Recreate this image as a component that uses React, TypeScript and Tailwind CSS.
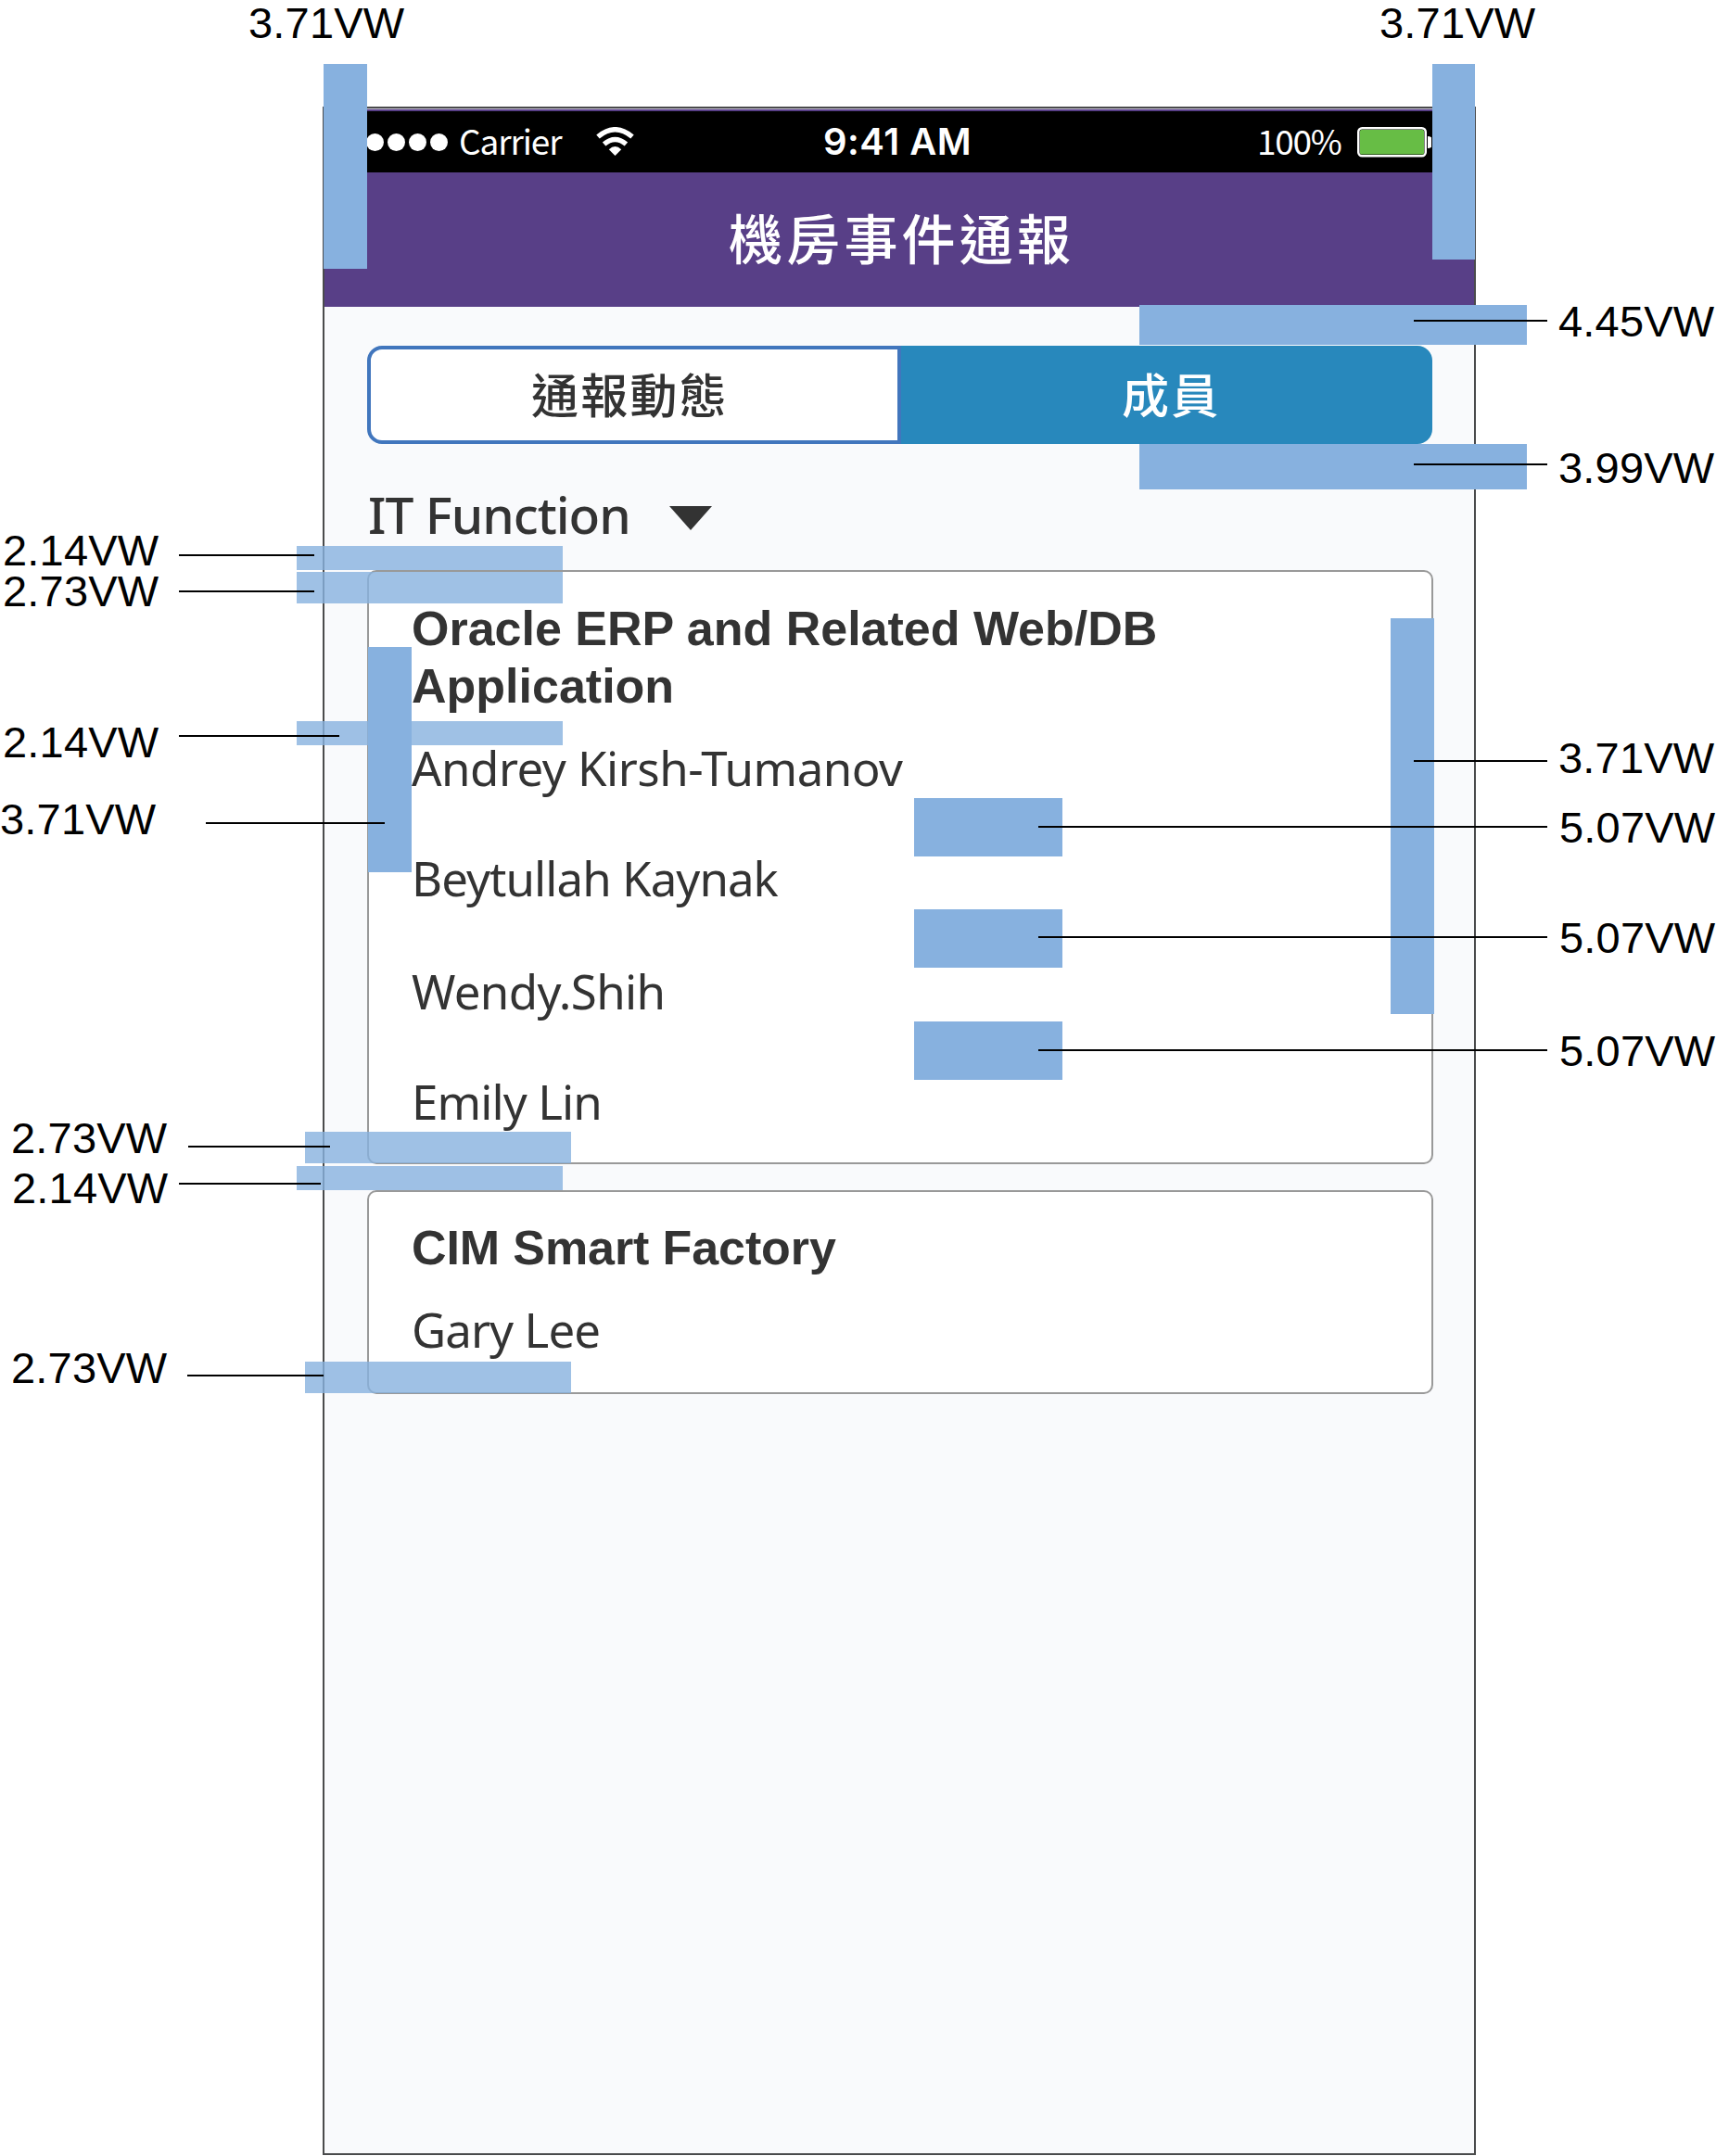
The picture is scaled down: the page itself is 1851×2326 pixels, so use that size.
type Group = { title: string; titleClass: string; members: { name: string; className: string }[] };

const GROUPS: Group[] = [
  {
    title: "Oracle ERP and Related Web/DB Application",
    titleClass: "h-[124px]",
    members: [
      { name: "Andrey Kirsh-Tumanov", className: "mt-[31px] tracking-[-0.5px]" },
      { name: "Beytullah Kaynak", className: "mt-[67px] tracking-[-0.95px]" },
      { name: "Wendy.Shih", className: "mt-[70px] tracking-[-0.65px]" },
      { name: "Emily Lin", className: "mt-[67px] tracking-[-0.9px]" },
    ],
  },
  {
    title: "CIM Smart Factory",
    titleClass: "h-[62px] tracking-[-0.1px]",
    members: [{ name: "Gary Lee", className: "mt-[31px] tracking-[-0.9px]" }],
  },
];

// Spacing guides laid over the mockup
const BARS = [
  "left-[320px] top-[589px] w-[287px] h-[26px] bg-[#87b1df]/80",
  "left-[320px] top-[617px] w-[287px] h-[34px] bg-[#87b1df]/80",
  "left-[320px] top-[778px] w-[287px] h-[26px] bg-[#87b1df]/80",
  "left-[329px] top-[1221px] w-[287px] h-[34px] bg-[#87b1df]/80",
  "left-[320px] top-[1258px] w-[287px] h-[26px] bg-[#87b1df]/80",
  "left-[329px] top-[1469px] w-[287px] h-[34px] bg-[#87b1df]/80",
  "left-[349px] top-[69px] w-[47px] h-[221px] bg-[#87b1df]",
  "left-[1545px] top-[69px] w-[46px] h-[211px] bg-[#87b1df]",
  "left-[1229px] top-[329px] w-[418px] h-[43px] bg-[#87b1df]",
  "left-[1229px] top-[479px] w-[418px] h-[49px] bg-[#87b1df]",
  "left-[397px] top-[698px] w-[47px] h-[243px] bg-[#87b1df]",
  "left-[1500px] top-[667px] w-[47px] h-[427px] bg-[#87b1df]",
  "left-[986px] top-[861px] w-[160px] h-[63px] bg-[#87b1df]",
  "left-[986px] top-[981px] w-[160px] h-[63px] bg-[#87b1df]",
  "left-[986px] top-[1102px] w-[160px] h-[63px] bg-[#87b1df]",
];

const LINES = [
  "left-[193px] top-[598px] w-[146px]",
  "left-[193px] top-[637px] w-[146px]",
  "left-[193px] top-[793px] w-[173px]",
  "left-[222px] top-[887px] w-[193px]",
  "left-[203px] top-[1236px] w-[153px]",
  "left-[193px] top-[1276px] w-[153px]",
  "left-[202px] top-[1483px] w-[147px]",
  "left-[1525px] top-[345px] w-[144px]",
  "left-[1525px] top-[500px] w-[144px]",
  "left-[1525px] top-[820px] w-[144px]",
  "left-[1120px] top-[891px] w-[549px]",
  "left-[1120px] top-[1010px] w-[549px]",
  "left-[1120px] top-[1132px] w-[549px]",
];

const LABELS: [string, string][] = [
  ["3.71VW", "left-[268px] top-[1px]"],
  ["3.71VW", "left-[1488px] top-[1px]"],
  ["4.45VW", "left-[1681px] top-[323px]"],
  ["3.99VW", "left-[1681px] top-[481px]"],
  ["3.71VW", "left-[1681px] top-[794px]"],
  ["5.07VW", "left-[1682px] top-[869px]"],
  ["5.07VW", "left-[1682px] top-[988px]"],
  ["5.07VW", "left-[1682px] top-[1110px]"],
  ["2.14VW", "left-[3px] top-[570px]"],
  ["2.73VW", "left-[3px] top-[614px]"],
  ["2.14VW", "left-[3px] top-[777px]"],
  ["3.71VW", "left-[0px] top-[860px]"],
  ["2.73VW", "left-[12px] top-[1204px]"],
  ["2.14VW", "left-[13px] top-[1258px]"],
  ["2.73VW", "left-[12px] top-[1452px]"],
];

function StatusBar() {
  return (
    <div className="mt-[2px] flex h-[66px] bg-black pl-[22px] text-white">
      <div className="mt-[24px] flex gap-[4px]">
        {[0, 1, 2, 3, 4].map((i) => (
          <span key={i} className="h-[19px] w-[19px] rounded-full bg-white" />
        ))}
      </div>
      <span className="mt-[13px] ml-[12px] w-[110px] font-['Noto_Sans_CJK_TC',sans-serif] text-[37px] leading-[37px] tracking-[-1.1px]">
        Carrier
      </span>
      <svg className="mt-[17px] ml-[38px] h-[32px] w-[41px]" viewBox="0 0 41 32" fill="none" stroke="#fff">
        <path d="M2 10.5 Q20.5 -5 39 10.5" strokeWidth="5.4" />
        <path d="M8.6 18.5 Q20.5 8.6 32.4 18.5" strokeWidth="5.4" />
        <path d="M13.8 24.2 Q20.5 18 27.2 24.2 L20.5 31Z" fill="#fff" stroke="none" />
      </svg>
      <span className="mt-[13px] ml-[204px] w-[160px] font-['Inter',sans-serif] text-[40px] leading-[40px] font-semibold tracking-[0.5px] whitespace-nowrap">
        9:41 AM
      </span>
      <span className="mt-[13px] ml-[308px] w-[92px] font-['Noto_Sans_CJK_TC',sans-serif] text-[37px] leading-[37px] tracking-[-1.3px]">
        100%
      </span>
      <svg className="mt-[17px] ml-[16px] h-[33px] w-[80px]" viewBox="0 0 80 33">
        <rect x="1.25" y="1.25" width="72.5" height="30" rx="4" fill="#000" stroke="#fff" strokeWidth="2.5" />
        <rect x="3" y="3" width="69" height="26.5" rx="1.5" fill="#67bd45" />
        <path d="M76 10 a6.5 6.5 0 0 1 0 13Z" fill="#fff" />
      </svg>
    </div>
  );
}

function GroupCard({ group, className }: { group: Group; className: string }) {
  return (
    <section className={`rounded-[10px] border-2 border-[#999] bg-white pl-[46px] text-[#333] ${className}`}>
      <h2
        className={`w-[860px] font-['Liberation_Sans',Arial,sans-serif] text-[52px] leading-[62px] font-bold ${group.titleClass}`}
      >
        {group.title}
      </h2>
      <ul>
        {group.members.map((m) => (
          <li
            key={m.name}
            className={`h-[52px] font-['Noto_Sans',sans-serif] text-[51px] leading-[52px] whitespace-nowrap ${m.className}`}
          >
            {m.name}
          </li>
        ))}
      </ul>
    </section>
  );
}

export default function App() {
  return (
    <div className="relative h-[2326px] w-[1851px] overflow-hidden bg-white pt-[115px] pl-[348px]">
      <main className="flex h-[2210px] w-[1244px] flex-col border-2 border-[#4a4b4c] bg-[#f9fafc]">
        <header className="h-[214px] bg-[#583f87] text-white">
          <div className="h-px bg-[#cfcbdc]" />
          <StatusBar />
          <h1 className="mt-[40px] pl-[436px] font-['Noto_Sans_CJK_TC',sans-serif] text-[58px] leading-[58px] font-medium tracking-[4.2px]">
            機房事件通報
          </h1>
        </header>

        <div className="px-[46px]">
          <div className="mt-[42px] flex h-[106px] w-[1149px] font-['Noto_Sans_CJK_TC',sans-serif] text-[51px] leading-[50px] font-medium tracking-[2.2px]">
            <button className="flex w-[576px] rounded-l-[16px] border-4 border-[#4176bd] bg-white pt-[22px] pl-[173px] text-[#333]">
              通報動態
            </button>
            <button className="flex w-[573px] rounded-r-[16px] bg-[#2888bc] pt-[26px] pl-[238px] text-white">
              成員
            </button>
          </div>

          <div className="mt-[48px] flex h-[56px] text-[#333]">
            <span className="w-[326px] pl-px font-['Noto_Sans',sans-serif] text-[55px] leading-[55px] font-medium tracking-[-1px]">
              IT Function
            </span>
            <svg className="mt-[19px] h-[26px] w-[46px]" viewBox="0 0 46 26">
              <path d="M0 0H46L23 26Z" fill="#333" />
            </svg>
          </div>

          <GroupCard group={GROUPS[0]} className="mt-[32px] h-[641px] w-[1150px] pt-[30px]" />
          <GroupCard group={GROUPS[1]} className="mt-[28px] h-[220px] w-[1150px] pt-[29px]" />
        </div>
      </main>

      {BARS.map((c) => (
        <div key={c} className={`absolute ${c}`} />
      ))}
      {LINES.map((c) => (
        <div key={c} className={`absolute h-[2px] bg-black ${c}`} />
      ))}
      {LABELS.map(([text, c]) => (
        <span
          key={c}
          className={`absolute font-['Liberation_Sans',Arial,sans-serif] text-[47px] leading-[47px] tracking-[0.2px] text-black ${c}`}
        >
          {text}
        </span>
      ))}
    </div>
  );
}
